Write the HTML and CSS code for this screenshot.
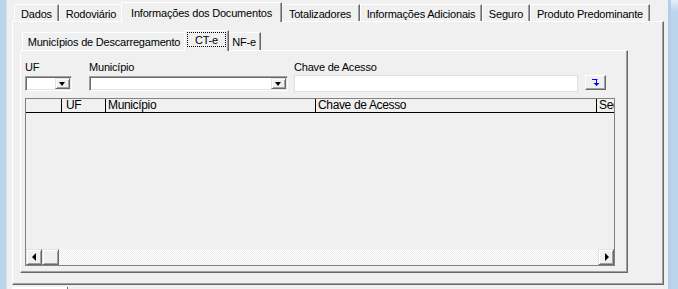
FILE: index.html
```html
<!DOCTYPE html>
<html>
  <head>
    <meta charset="utf-8">
    <title>Informações dos Documentos</title>
    <link rel="stylesheet" href="styles.css">
  </head>
  <body>
    <div class="window">
      <div class="frame frame--left"></div>
      <div class="client">
        <div class="pages pages--main">
          <div class="tabs tabs--main">
            <div class="tab tab--dados">Dados</div>
            <div class="tab tab--rodoviario">Rodoviário</div>
            <div class="tab tab--active tab--documentos">Informações dos Documentos</div>
            <div class="tab tab--totalizadores">Totalizadores</div>
            <div class="tab tab--adicionais">Informações Adicionais</div>
            <div class="tab tab--seguro">Seguro</div>
            <div class="tab tab--produto">Produto Predominante</div>
          </div>
          <div class="sheet sheet--main">
            <div class="pages pages--docs">
              <div class="tabs tabs--docs">
                <div class="tab tab--municipios">Municípios de Descarregamento</div>
                <div class="tab tab--active tab--cte"><span class="tab__focus">CT-e</span></div>
                <div class="tab tab--nfe">NF-e</div>
              </div>
              <div class="sheet sheet--docs">
                <div class="filters">
                  <div class="field field--uf">
                    <span class="field__label">UF</span>
                    <span class="combo"><span class="combo__text"></span><span class="combo__button"></span></span>
                  </div>
                  <div class="field field--municipio">
                    <span class="field__label">Município</span>
                    <span class="combo"><span class="combo__text"></span><span class="combo__button"></span></span>
                  </div>
                  <div class="field field--chave">
                    <span class="field__label">Chave de Acesso</span>
                    <input class="edit" type="text">
                  </div>
                  <button type="button" class="btn-insert">
                    <svg width="8" height="8" viewBox="0 0 8 8">
                      <path d="M0 0.5H5.5M4.5 0V4" stroke="#0000ff" stroke-width="1" fill="none"/>
                      <path d="M1.5 4H7.5L4.5 7Z" fill="#0000ff"/>
                    </svg>
                  </button>
                </div>
                <div class="grid">
                  <div class="grid__header">
                    <div class="grid__cell grid__cell--indicator"></div>
                    <div class="grid__cell grid__cell--uf">UF</div>
                    <div class="grid__cell grid__cell--municipio">Município</div>
                    <div class="grid__cell grid__cell--chave">Chave de Acesso</div>
                    <div class="grid__cell grid__cell--seg">Seg</div>
                  </div>
                  <div class="grid__body"></div>
                  <div class="scrollbar">
                    <div class="scrollbar__button scrollbar__button--left"></div>
                    <div class="scrollbar__thumb"></div>
                    <div class="scrollbar__track"></div>
                    <div class="scrollbar__button scrollbar__button--right"></div>
                  </div>
                </div>
              </div>
            </div>
          </div>
        </div>
        <div class="statusbar"><div class="statusbar__panel"></div></div>
      </div>
      <div class="frame frame--right"></div>
    </div>
  </body>
</html>
```

FILE: styles.css
```css
body {
    margin: 0;
    background: #f0f0f0;
    font-family: "Liberation Sans", Arial, sans-serif;
    font-size: 11px;
    letter-spacing: -0.2px;
    color: #000;
}

.window {
    display: flex;
    width: 678px;
    height: 289px;
    overflow: hidden;
}

.frame {
    background: #bcd4ec;
}
.frame--left {
    width: 7px;
    box-shadow: inset -1px 0 #d4e3f3;
}
.frame--right {
    width: 10px;
    background: linear-gradient(#e4eef8, #bcd4ec 12px);
    box-shadow: inset 3px 0 #b4cde8;
}

.client {
    width: 661px;
    padding: 2px 0 0 5px;
    box-sizing: border-box;
}

/* page controls */
.pages--main {
    width: 652px;
}
.pages--docs {
    width: 608px;
}

.tabs {
    display: flex;
    align-items: flex-end;
    height: 19px;
    padding-left: 2px;
}
.tabs--docs {
    height: 20px;
}

.tab {
    position: relative;
    box-sizing: border-box;
    height: 17px;
    padding-top: 3px;
    line-height: 13px;
    text-align: center;
    white-space: nowrap;
    background: #f0f0f0;
    border-top: 1px solid #fff;
    border-left: 1px solid #fff;
    border-right: 1px solid #696969;
    box-shadow: inset -1px 0 #a0a0a0;
}
.tabs--docs .tab {
    height: 18px;
}
.tab--active {
    z-index: 1;
    height: 20px;
    margin: 0 -2px -1px;
    padding-top: 4px;
}
.tabs--docs .tab--active {
    height: 21px;
    padding: 1px 2px 0;
}
.tab__focus {
    display: block;
    height: 15px;
    box-sizing: border-box;
    padding-top: 1px;
    line-height: 12px;
    border: 1px dotted #000;
}

.tab--dados { width: 45px; }
.tab--rodoviario { width: 64px; }
.tab--documentos { width: 161px; }
.tab--totalizadores { width: 80px; }
.tab--adicionais { width: 122px; }
.tab--seguro { width: 48px; }
.tab--produto { width: 120px; }
.tab--municipios { width: 164px; }
.tab--cte { width: 45px; }
.tab--nfe { width: 34px; }

.sheet {
    box-sizing: border-box;
    border: 1px solid;
    border-color: #fff #696969 #696969 #fff;
    box-shadow: inset -1px -1px #a0a0a0;
}
.sheet--main {
    height: 264px;
    padding: 8px 0 0 7px;
}
.sheet--docs {
    height: 223px;
    padding: 10px 0 0 4px;
}

/* filter row */
.filters {
    display: flex;
    align-items: flex-start;
}
.field {
    display: flex;
    flex-direction: column;
}
.field__label {
    line-height: 13px;
    height: 13px;
}
.field--uf { width: 47px; margin-right: 17px; }
.field--municipio { width: 199px; margin-right: 6px; }
.field--chave { width: 284px; margin-right: 7px; }

.combo {
    display: flex;
    height: 15px;
    margin-top: 2px;
    box-sizing: border-box;
    background: #fff;
    border: 1px solid;
    border-color: #a0a0a0 #fff #fff #a0a0a0;
    box-shadow: inset 1px 1px #696969, inset -1px -1px #e3e3e3;
    padding: 1px;
}
.combo__text {
    flex: 1;
}
.combo__button {
    position: relative;
    width: 15px;
    box-sizing: border-box;
    background: #f0f0f0;
    border: 1px solid;
    border-color: #e3e3e3 #696969 #696969 #e3e3e3;
    box-shadow: inset 1px 1px #fff, inset -1px -1px #a0a0a0;
}
.combo__button::after {
    content: "";
    position: absolute;
    left: 3px;
    top: 3px;
    border-style: solid;
    border-width: 4px 3.5px 0;
    border-color: #000 transparent transparent;
}

.edit {
    display: block;
    margin: 1px 0 0;
    width: 284px;
    height: 17px;
    box-sizing: border-box;
    padding: 0;
    background: #fff;
    border: 1px solid #e0e0e0;
    outline: none;
}

.btn-insert {
    display: flex;
    align-items: center;
    justify-content: center;
    margin-top: 14px;
    width: 21px;
    height: 15px;
    padding: 0 0 0 1px;
    background: #f0f0f0;
    border: 1px solid;
    border-color: #fff #696969 #696969 #fff;
    box-shadow: inset -1px -1px #a0a0a0;
}

/* grid */
.grid {
    display: flex;
    flex-direction: column;
    width: 590px;
    height: 168px;
    margin-top: 6px;
    box-sizing: border-box;
    border: 1px solid #828282;
}
.grid__header {
    display: flex;
    height: 14px;
    box-sizing: border-box;
    border-bottom: 1px solid #000;
    font-size: 12px;
    letter-spacing: -0.35px;
    line-height: 13px;
}
.grid__cell {
    box-sizing: border-box;
    padding-left: 2px;
    border-right: 1px solid #000;
    white-space: nowrap;
    overflow: hidden;
}
.grid__cell--indicator { width: 36px; }
.grid__cell--uf { width: 44px; padding-left: 4px; }
.grid__cell--municipio { width: 210px; }
.grid__cell--chave { width: 281px; }
.grid__cell--seg { flex: 1; border-right: none; }
.grid__body {
    flex: 1;
}

.scrollbar {
    display: flex;
    height: 16px;
}
.scrollbar__button,
.scrollbar__thumb {
    position: relative;
    width: 16px;
    box-sizing: border-box;
    background: #f0f0f0;
    border: 1px solid;
    border-color: #e3e3e3 #696969 #696969 #e3e3e3;
    box-shadow: inset 1px 1px #fff, inset -1px -1px #a0a0a0;
}
.scrollbar__thumb {
    width: 17px;
}
.scrollbar__track {
    flex: 1;
    background: repeating-conic-gradient(#fff 0 25%, #ebebeb 0 50%) 0 0 / 2px 2px;
}
.scrollbar__button::after {
    content: "";
    position: absolute;
    top: 3px;
    border-style: solid;
}
.scrollbar__button--left::after {
    left: 5px;
    border-width: 4px 4px 4px 0;
    border-color: transparent #000 transparent transparent;
}
.scrollbar__button--right::after {
    left: 6px;
    border-width: 4px 0 4px 4px;
    border-color: transparent transparent transparent #000;
}

.statusbar {
    margin-top: 2px;
    height: 2px;
}
.statusbar__panel {
    width: 55px;
    height: 2px;
    background: #fff;
    border-right: 1px solid #696969;
}
```
